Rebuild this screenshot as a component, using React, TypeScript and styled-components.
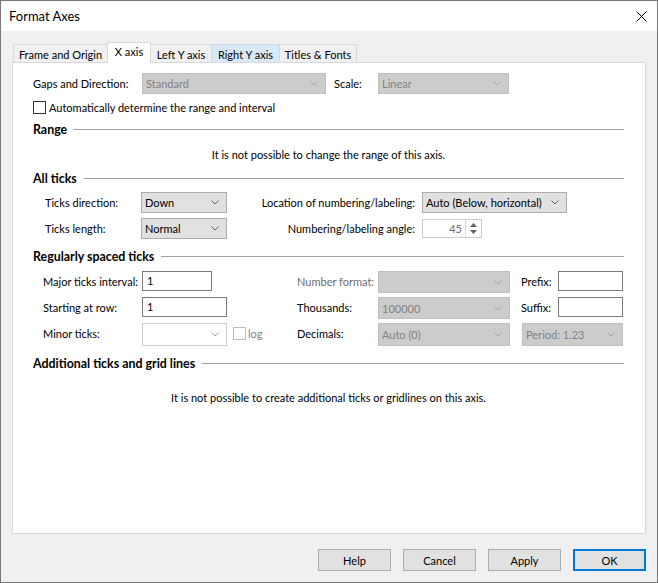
import React from "react";
import styled, { createGlobalStyle, css } from "styled-components";

const GlobalStyle = createGlobalStyle`
  html, body {
    margin: 0;
    padding: 0;
  }
  body {
    font-family: Lato, "Liberation Sans", sans-serif;
    font-size: 11px;
    color: #000;
  }
  * {
    box-sizing: border-box;
  }
`;

const Window = styled.div`
  width: 658px;
  height: 583px;
  border: 1px solid #777777;
  background: #f0f0f0;
  display: flex;
  flex-direction: column;
`;

const TitleBar = styled.div`
  height: 30px;
  flex-shrink: 0;
  background: #ffffff;
  display: flex;
  align-items: center;
  justify-content: space-between;
  padding: 0 10px 0 8px;
`;

const Title = styled.span`
  font-size: 13px;
`;

const CloseButton = styled.div`
  width: 12px;
  height: 12px;
  display: flex;
  align-items: center;
  justify-content: center;
`;

const Body = styled.div`
  flex: 1;
  min-height: 0;
  display: flex;
  flex-direction: column;
  padding: 11px;
`;

const TabRow = styled.div`
  display: flex;
  align-items: flex-end;
  height: 20px;
  padding-left: 1px;
  position: relative;
  z-index: 1;
`;

const Tab = styled.div<{ $w: number; $active?: boolean; $hover?: boolean }>`
  width: ${(p) => p.$w}px;
  height: 18px;
  border: 1px solid #d9d9d9;
  border-bottom: none;
  border-right: none;
  background: ${(p) => (p.$hover ? "#d8eaf9" : "#f0f0f0")};
  display: flex;
  align-items: center;
  justify-content: center;
  padding-top: 1px;
  white-space: nowrap;

  &:last-child {
    border-right: 1px solid #d9d9d9;
  }

  ${(p) =>
    p.$active &&
    css`
      height: 21px;
      margin-bottom: -1px;
      background: #ffffff;
      border-right: 1px solid #d9d9d9;
      align-items: flex-start;
      padding-top: 2px;
      & + div {
        border-left: none;
      }
    `}
`;

const Panel = styled.div`
  flex: 1;
  min-height: 0;
  background: #ffffff;
  border: 1px solid #d9d9d9;
  padding: 10px 21px 0 20px;
  display: flex;
  flex-direction: column;
`;

const TopRow = styled.div`
  display: flex;
  align-items: center;
  height: 21px;
`;

const Label = styled.span<{ $w?: number; $disabled?: boolean; $right?: boolean; $ml?: number }>`
  ${(p) => p.$w && `width: ${p.$w}px; flex-shrink: 0;`}
  ${(p) => p.$ml && `margin-left: ${p.$ml}px;`}
  color: ${(p) => (p.$disabled ? "#6d6d6d" : "#000")};
  white-space: nowrap;
  ${(p) => p.$right && `text-align: right; padding-right: 7px;`}
`;

const GridLabel = styled(Label)`
  height: 21px;
  line-height: 21px;
`;

const CheckRow = styled.label`
  display: flex;
  align-items: center;
  gap: 3px;
  height: 13px;
  margin-top: 7px;
`;

const Box = styled.span<{ $disabled?: boolean }>`
  width: 13px;
  height: 13px;
  flex-shrink: 0;
  background: #ffffff;
  border: 1px solid ${(p) => (p.$disabled ? "#bcbcbc" : "#333333")};
`;

const SectionHeader = styled.div<{ $mt: number }>`
  display: flex;
  align-items: center;
  gap: 7px;
  height: 16px;
  margin-top: ${(p) => p.$mt}px;
  font-size: 12.4px;
  font-weight: bold;
  white-space: nowrap;

  &::after {
    content: "";
    flex: 1;
    height: 1px;
    background: #a0a0a0;
  }
`;

const Message = styled.div<{ $mt: number }>`
  height: 16px;
  line-height: 16px;
  margin-top: ${(p) => p.$mt}px;
  text-align: center;
`;

const TicksGrid = styled.div`
  display: grid;
  grid-template-columns: 96px 86px 195px 145px;
  grid-auto-rows: 21px;
  row-gap: 5px;
  align-items: center;
  padding-left: 12px;
  margin-top: 6px;
`;

const RegularGrid = styled.div`
  display: grid;
  grid-template-columns: 99px 85px 70px 81px 132px 11px 37px 65px;
  grid-auto-rows: 23px;
  row-gap: 3px;
  align-items: start;
  padding-left: 10px;
  margin-top: 7px;
`;

type SelectKind = "normal" | "disabled" | "blank";

const SelectBox = styled.div<{ $kind: SelectKind; $w?: number; $h: number }>`
  ${(p) => (p.$w ? `width: ${p.$w}px;` : "width: 100%;")}
  height: ${(p) => p.$h}px;
  display: flex;
  align-items: center;
  justify-content: space-between;
  padding: 0 7px 0 3px;
  white-space: nowrap;
  ${(p) =>
    p.$kind === "normal"
      ? css`
          background: #e1e1e1;
          border: 1px solid #adadad;
          color: #000;
        `
      : p.$kind === "disabled"
      ? css`
          background: #cccccc;
          border: 1px solid #bfbfbf;
          color: #838383;
        `
      : css`
          background: #ffffff;
          border: 1px solid #cccccc;
          color: #838383;
        `}
`;

const SpanSelect = styled.div`
  grid-column: 7 / span 2;
  margin-left: 1px;
`;

const TextInput = styled.div<{ $w?: number }>`
  ${(p) => (p.$w ? `width: ${p.$w}px;` : "width: 100%;")}
  height: 20px;
  border: 1px solid #7a7a7a;
  background: #ffffff;
  padding: 0 4px;
  line-height: 18px;
`;

const LogCell = styled.div`
  display: flex;
  align-items: center;
  gap: 2px;
  height: 23px;
  padding-left: 6px;
  color: #838383;
  margin-top: -1px;
`;

const Spin = styled.div`
  width: 60px;
  height: 19px;
  display: flex;
  border: 1px solid #cccccc;
  background: #ffffff;
`;

const SpinValue = styled.div`
  flex: 1;
  text-align: right;
  padding-right: 3px;
  line-height: 17px;
  color: #6d6d6d;
`;

const SpinButtons = styled.div`
  width: 16px;
  border-left: 1px solid #dadada;
  display: flex;
  flex-direction: column;
  align-items: center;
  justify-content: center;
  gap: 3px;
`;

const ButtonRow = styled.div`
  display: flex;
  justify-content: flex-end;
  gap: 12px;
  margin-top: 15px;
  height: 22px;
  flex-shrink: 0;
`;

const DialogButton = styled.div<{ $default?: boolean }>`
  width: 73px;
  height: 22px;
  background: #e1e1e1;
  border: ${(p) => (p.$default ? "2px solid #0078d7" : "1px solid #adadad")};
  display: flex;
  align-items: center;
  justify-content: center;
`;

const Chevron: React.FC<{ light?: boolean }> = ({ light }) => (
  <svg width="8" height="5" viewBox="0 0 8 5">
    <polyline
      points="0.5,0.5 4,4 7.5,0.5"
      fill="none"
      stroke={light ? "#a6a6a6" : "#606060"}
      strokeWidth="1"
    />
  </svg>
);

interface SelectProps {
  value?: string;
  kind?: SelectKind;
  w?: number;
  h?: number;
}

const Select: React.FC<SelectProps> = ({ value, kind = "normal", w, h = 21 }) => (
  <SelectBox $kind={kind} $w={w} $h={h}>
    <span>{value}</span>
    <Chevron light={kind !== "normal"} />
  </SelectBox>
);

const tabs = [
  { label: "Frame and Origin", w: 94 },
  { label: "X axis", w: 44, active: true },
  { label: "Left Y axis", w: 60 },
  { label: "Right Y axis", w: 68, hover: true },
  { label: "Titles & Fonts", w: 78 },
];

export default function App() {
  return (
    <>
      <GlobalStyle />
      <Window>
        <TitleBar>
          <Title>Format Axes</Title>
          <CloseButton>
            <svg width="11" height="11" viewBox="0 0 11 11">
              <path d="M0.5 0.5 L10.5 10.5 M10.5 0.5 L0.5 10.5" stroke="#000" strokeWidth="1" />
            </svg>
          </CloseButton>
        </TitleBar>
        <Body>
          <TabRow>
            {tabs.map((t) => (
              <Tab key={t.label} $w={t.w} $active={t.active} $hover={t.hover}>
                {t.label}
              </Tab>
            ))}
          </TabRow>
          <Panel>
            <TopRow>
              <Label $w={109}>Gaps and Direction:</Label>
              <Select value="Standard" kind="disabled" w={184} />
              <Label $w={44} $ml={8}>
                Scale:
              </Label>
              <Select value="Linear" kind="disabled" w={131} />
            </TopRow>
            <CheckRow>
              <Box />
              <span>Automatically determine the range and interval</span>
            </CheckRow>

            <SectionHeader $mt={7}>Range</SectionHeader>
            <Message $mt={10}>It is not possible to change the range of this axis.</Message>

            <SectionHeader $mt={7}>All ticks</SectionHeader>
            <TicksGrid>
              <Label>Ticks direction:</Label>
              <Select value="Down" />
              <Label $right>Location of numbering/labeling:</Label>
              <Select value="Auto (Below, horizontal)" />
              <Label>Ticks length:</Label>
              <Select value="Normal" />
              <Label $right>Numbering/labeling angle:</Label>
              <Spin>
                <SpinValue>45</SpinValue>
                <SpinButtons>
                  <svg width="7" height="4" viewBox="0 0 7 4">
                    <polygon points="0,4 3.5,0 7,4" fill="#606060" />
                  </svg>
                  <svg width="7" height="4" viewBox="0 0 7 4">
                    <polygon points="0,0 3.5,4 7,0" fill="#606060" />
                  </svg>
                </SpinButtons>
              </Spin>
            </TicksGrid>

            <SectionHeader $mt={9}>Regularly spaced ticks</SectionHeader>
            <RegularGrid>
              <GridLabel>Major ticks interval:</GridLabel>
              <TextInput $w={70}>1</TextInput>
              <div />
              <GridLabel $disabled>Number format:</GridLabel>
              <Select kind="disabled" h={22} />
              <div />
              <GridLabel>Prefix:</GridLabel>
              <TextInput />

              <GridLabel>Starting at row:</GridLabel>
              <TextInput>1</TextInput>
              <div />
              <GridLabel>Thousands:</GridLabel>
              <Select value="100000" kind="disabled" h={22} />
              <div />
              <GridLabel>Suffix:</GridLabel>
              <TextInput />

              <GridLabel>Minor ticks:</GridLabel>
              <Select kind="blank" h={23} />
              <LogCell>
                <Box $disabled />
                <span>log</span>
              </LogCell>
              <GridLabel>Decimals:</GridLabel>
              <Select value="Auto (0)" kind="disabled" h={23} />
              <div />
              <SpanSelect>
                <Select value="Period: 1.23" kind="disabled" h={23} />
              </SpanSelect>
            </RegularGrid>

            <SectionHeader $mt={9}>Additional ticks and grid lines</SectionHeader>
            <Message $mt={19}>
              It is not possible to create additional ticks or gridlines on this axis.
            </Message>
          </Panel>
          <ButtonRow>
            <DialogButton>Help</DialogButton>
            <DialogButton>Cancel</DialogButton>
            <DialogButton>Apply</DialogButton>
            <DialogButton $default>OK</DialogButton>
          </ButtonRow>
        </Body>
      </Window>
    </>
  );
}
